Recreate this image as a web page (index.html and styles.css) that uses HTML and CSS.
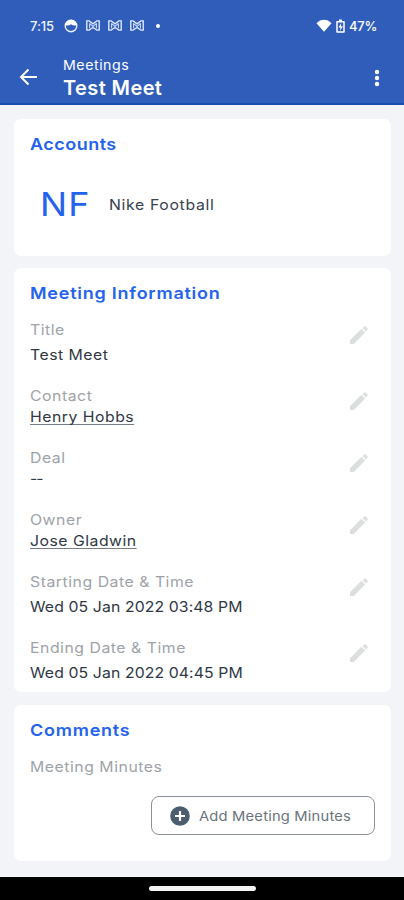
FILE: index.html
```html
<!DOCTYPE html>
<html lang="en">
<head>
<meta charset="utf-8">
<title>Test Meet</title>
<link rel="stylesheet" href="styles.css">
</head>
<body>
<svg width="0" height="0" class="defs">
  <symbol id="pencil" viewBox="0 0 24 24"><path d="M3 17.200V21h3.800L18.200 9.600l-3.800-3.800zM20.600 6.800a1 1 0 0 0 0-1.400l-2-2a1 1 0 0 0-1.400 0l-1.700 1.700L19 8.500z"/></symbol>
  <symbol id="mail" viewBox="0 0 16 14"><path d="M1.300 12V2h2.500L8 5.200 12.200 2h2.500v10h-2.500L8 9.200 3.800 12z" fill="none" stroke="#dce8ff" stroke-width="1.500"/><path d="M4.300 4.500v5.500M11.700 4.500v5.500M4.500 5 8 8l3.500-3" fill="none" stroke="#c5d7fa" stroke-width="1.200"/></symbol>
</svg>
<div class="screen">
  <header class="top">
    <div class="status">
      <span class="clock">7:15</span>
      <svg class="face" viewBox="0 0 14 14"><circle cx="7" cy="7" r="5.800" fill="none" stroke="#e6eeff" stroke-width="1.400"/><path d="M1 6C1.500 2.500 4 .8 7 .8S12.500 2.500 13 6c-2 .9-4 .6-6-.7C5 6.600 3 6.900 1 6z" fill="#fff"/></svg>
      <svg class="mail"><use href="#mail"/></svg>
      <svg class="mail"><use href="#mail"/></svg>
      <svg class="mail"><use href="#mail"/></svg>
      <i class="dot"></i>
      <svg class="wifi" viewBox="0 0 16 13"><path d="M.5 4.200C4.800-.3 11.200-.3 15.500 4.200L8 12.800z" fill="#fff"/></svg>
      <svg class="battery" viewBox="0 0 9 14"><path d="M3 1.200h3M1 2.800h7v10.200H1z" fill="none" stroke="#fff" stroke-width="1.500" stroke-linejoin="round"/><path d="M5.200 4 2.500 8.500h2L4 12l3-4.800H5z" fill="#fff"/></svg>
      <span class="percent">47%</span>
    </div>
    <div class="bar">
      <svg class="back" viewBox="0 0 18 18"><path d="M17.500 9H1.500M9 1.500 1.500 9 9 16.500" fill="none" stroke="#fff" stroke-width="2"/></svg>
      <div class="names"><div class="module">Meetings</div><h1>Test Meet</h1></div>
      <svg class="more" viewBox="0 0 6 18"><g fill="#fff"><circle cx="3" cy="3" r="2.200"/><circle cx="3" cy="9" r="2.200"/><circle cx="3" cy="15" r="2.200"/></g></svg>
    </div>
  </header>
  <main>
    <section class="card accounts">
      <h2 class="h-acc">Accounts</h2>
      <div class="account"><div class="avatar"><span class="initials">NF</span></div><span class="account-name">Nike Football</span></div>
    </section>
    <section class="card info">
      <h2>Meeting Information</h2>
      <div class="field"><label>Title</label><p>Test Meet</p><svg class="edit"><use href="#pencil"/></svg></div>
      <div class="field tight"><label>Contact</label><p><a>Henry Hobbs</a></p><svg class="edit"><use href="#pencil"/></svg></div>
      <div class="field tight"><label>Deal</label><p class="empty">--</p><svg class="edit"><use href="#pencil"/></svg></div>
      <div class="field tight"><label>Owner</label><p><a>Jose Gladwin</a></p><svg class="edit"><use href="#pencil"/></svg></div>
      <div class="field"><label>Starting Date &amp; Time</label><p class="date">Wed 05 Jan 2022 03:48 PM</p><svg class="edit"><use href="#pencil"/></svg></div>
      <div class="field"><label>Ending Date &amp; Time</label><p class="date">Wed 05 Jan 2022 04:45 PM</p><svg class="edit"><use href="#pencil"/></svg></div>
    </section>
    <section class="card comments">
      <h2>Comments</h2>
      <label>Meeting Minutes</label>
      <button><svg viewBox="0 0 20 20"><circle cx="10" cy="10" r="9.800" fill="#4c5e6d"/><path d="M10 5v10M5 10h10" stroke="#fff" stroke-width="2.200"/></svg><span>Add Meeting Minutes</span></button>
    </section>
  </main>
  <footer><i></i></footer>
</div>
</body>
</html>
```
FILE: styles.css
```css
* { box-sizing: border-box; }
body { margin: 0; font-family: Inter, sans-serif; background: #f2f4f8; }
h1, h2, p { margin: 0; }
svg { display: block; flex: none; }
.defs { position: absolute; }
.screen { width: 404px; height: 900px; display: flex; flex-direction: column; overflow: hidden; }
.top { height: 105px; background: #305dba; border-bottom: 2px solid #174bae; color: #fff; }
.status { height: 51px; padding: 0 27px 0 30px; display: flex; align-items: center; }
.clock { width: 34px; font-size: 13px; font-weight: 500; letter-spacing: -.1px; color: #edf3ff; }
.face { width: 14px; height: 14px; margin-right: 7px; }
.mail { width: 16px; height: 13px; margin-right: 6px; }
.dot { width: 4px; height: 4px; border-radius: 50%; background: #fff; margin-left: 5px; }
.wifi { width: 16px; height: 13px; margin-left: auto; }
.battery { width: 9px; height: 14px; margin: 0 4px 0 4px; }
.percent { width: 28px; font-size: 13px; font-weight: 500; letter-spacing: -.2px; white-space: nowrap; }
.bar { display: flex; height: 52px; padding: 0 24px 0 19px; }
.back { width: 19px; height: 18px; margin-top: 17px; }
.names { margin-left: 25px; flex: 1; }
/* Widened letterforms for the app's text */
.module, h2, label, .field p, .account-name, .initials, button span { width: max-content; transform: scaleX(1.09); transform-origin: left center; }
.module { font-size: 13px; line-height: 18px; margin-top: 5px; letter-spacing: .5px; }
h1 { font-size: 20px; line-height: 26px; padding-top: 1px; font-weight: 600; letter-spacing: .4px; }
.more { width: 6px; height: 18px; margin-top: 18px; }
main { flex: 1; display: flex; flex-direction: column; padding: 14px 13px 0 14px; }
.card { background: #fff; border-radius: 7px; padding: 0 16px; }
.accounts { height: 137px; margin-bottom: 12px; }
.info { height: 424px; margin-bottom: 13px; }
.comments { height: 156px; display: flex; flex-direction: column; }
h2 { color: #2463eb; font-size: 16.5px; line-height: 22px; padding-top: 14px; font-weight: 600; letter-spacing: .7px; white-space: nowrap; }
.h-acc { letter-spacing: .45px; }
.account { display: flex; align-items: center; height: 48px; margin-top: 25px; padding-left: 10px; }
.avatar { width: 69px; }
.initials { display: block; font-size: 33px; font-weight: 400; color: #2463eb; letter-spacing: 1px; }
.account-name { font-size: 14.5px; letter-spacing: .6px; color: #384250; }
.info h2 { height: 52px; }
.field { display: grid; grid-template-columns: 1fr 20px; grid-template-rows: 20px 20px; row-gap: 5px; margin-bottom: 21px; }
.tight { row-gap: 1px; }
label { font-size: 14.5px; line-height: 20px; letter-spacing: .48px; color: #9ea3a9; }
.field p { grid-row: 2; font-size: 14.5px; line-height: 20px; letter-spacing: .45px; color: #303844; }
.field .date { letter-spacing: .09px; }
.field .empty { letter-spacing: -1px; }
a { text-decoration: underline; text-decoration-color: #777e88; text-decoration-thickness: 1px; text-underline-offset: 2px; text-decoration-skip-ink: none; }
.edit { grid-column: 2; grid-row: 1 / 3; width: 24px; height: 24px; margin: 3px 0 0 -8px; fill: #dcdfe0; }
.comments label { margin-top: 16px; }
button { width: 224px; height: 39px; align-self: flex-end; margin-top: 19px; padding: 0 0 0 18px; display: flex; align-items: center; gap: 9px; border: 1px solid #8b9299; border-radius: 8px; background: #fff; color: #6a737c; font: 13.5px Inter, sans-serif; letter-spacing: .18px; white-space: nowrap; }
button svg { width: 20px; height: 20px; }
footer { height: 23px; background: #000; display: flex; align-items: center; justify-content: center; }
footer i { width: 107px; height: 5px; border-radius: 3px; background: #f4f3f5; }
```
